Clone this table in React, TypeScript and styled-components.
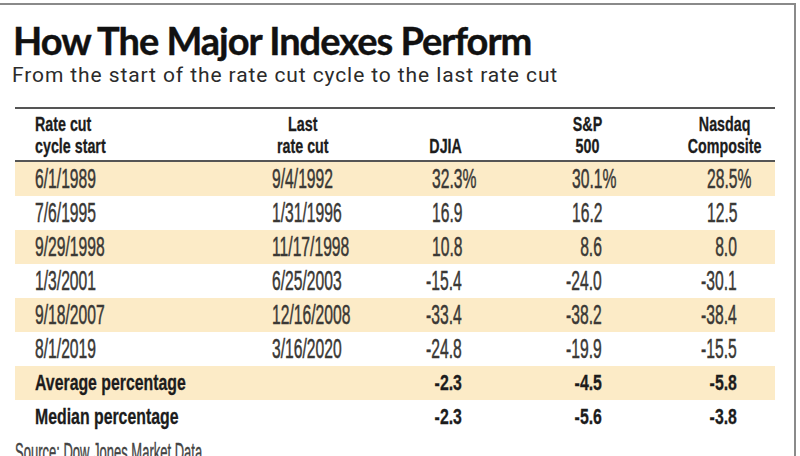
import React from "react"
import styled, { createGlobalStyle } from "styled-components"

const GlobalStyle = createGlobalStyle`
  html, body {
    margin: 0;
    padding: 0;
    background: #ffffff;
  }
  body {
    width: 800px;
    height: 456px;
    overflow: hidden;
  }
`

const NARROW = `"Liberation Sans", Arial, sans-serif`

const Frame = styled.div`
  box-sizing: border-box;
  margin-top: 3px;
  width: 796px;
  height: 453px;
  border-top: 2px solid #8a8a8a;
  border-right: 2px solid #8a8a8a;
  overflow: hidden;
`

const Title = styled.h1`
  margin: 13px 0 0 13px;
  font-family: Lato, "Open Sans", sans-serif;
  font-weight: 700;
  font-size: 38px;
  line-height: 44px;
  letter-spacing: -1px;
  color: #111111;
  -webkit-text-stroke: 0.4px #111111;
`

const Subtitle = styled.p`
  margin: 1px 0 0 12px;
  font-family: Roboto, "Open Sans", sans-serif;
  font-size: 21px;
  line-height: 24px;
  letter-spacing: 0.9px;
  color: #2b2b2b;
`

const Table = styled.div`
  margin: 20px 0 0 15px;
  width: 760px;
  border-top: 2px solid #555555;
`

const Row = styled.div<{ $band?: boolean; $head?: boolean }>`
  display: grid;
  grid-template-columns: 237px 118px 72px 140px 135px;
  padding: 0 38px 0 20px;
  height: ${(p) => (p.$head ? "53px" : "34px")};
  align-items: ${(p) => (p.$head ? "end" : "center")};
  background: ${(p) => (p.$band ? "#fcebc7" : "transparent")};
  border-bottom: ${(p) => (p.$head ? "2px solid #555555" : "none")};
  box-sizing: border-box;
`

const Cell = styled.div<{ $align?: "left" | "right"; $shift?: number }>`
  text-align: ${(p) => p.$align ?? "left"};
  margin-right: ${(p) => (p.$shift ? `-${p.$shift}px` : "0")};
  white-space: nowrap;
`

const Squeeze = styled.span<{
  $bold?: boolean
  $origin?: "left" | "right" | "center"
  $center?: boolean
  $indent?: number
}>`
  position: relative;
  display: inline-block;
  font-family: ${NARROW};
  font-weight: ${(p) => (p.$bold ? 700 : 400)};
  font-size: ${(p) => (p.$bold ? "22px" : "28px")};
  line-height: ${(p) => (p.$bold ? "22px" : "34px")};
  color: ${(p) => (p.$bold ? "#1c1c1c" : "#3a3835")};
  -webkit-text-stroke: ${(p) => (p.$bold ? "0.3px" : "0.5px")} currentColor;
  text-align: ${(p) => (p.$center ? "center" : "inherit")};
  margin-left: ${(p) => p.$indent ?? 0}px;
  transform: scaleX(${(p) => (p.$bold ? 0.72 : 0.56)});
  transform-origin: ${(p) => p.$origin ?? "left"} center;
`

const HeadText = styled(Squeeze)`
  padding-bottom: 3px;
  font-size: 21px;
  transform: scaleX(0.68);
`

const Hang = styled.span`
  position: absolute;
  left: 100%;
  top: 0;
`

const Source = styled.div`
  margin: 4px 0 0 15px;
  font-family: ${NARROW};
  font-size: 25px;
  line-height: 28px;
  color: #444444;
  -webkit-text-stroke: 0.4px #444444;
  white-space: nowrap;
  transform: scaleX(0.52);
  transform-origin: left center;
`

type Line = [string, string, string, string, string]

const rows: Line[] = [
  ["6/1/1989", "9/4/1992", "32.3%", "30.1%", "28.5%"],
  ["7/6/1995", "1/31/1996", "16.9", "16.2", "12.5"],
  ["9/29/1998", "11/17/1998", "10.8", "8.6", "8.0"],
  ["1/3/2001", "6/25/2003", "-15.4", "-24.0", "-30.1"],
  ["9/18/2007", "12/16/2008", "-33.4", "-38.2", "-38.4"],
  ["8/1/2019", "3/16/2020", "-24.8", "-19.9", "-15.5"],
]

const summary = [
  { label: "Average percentage", values: ["-2.3", "-4.5", "-5.8"] },
  { label: "Median percentage", values: ["-2.3", "-5.6", "-3.8"] },
]

const Num = ({ value, bold }: { value: string; bold?: boolean }) => {
  const pct = value.endsWith("%")
  return (
    <Cell $align="right">
      <Squeeze $bold={bold} $origin="right">
        {pct ? value.slice(0, -1) : value}
        {pct && <Hang>%</Hang>}
      </Squeeze>
    </Cell>
  )
}

export default function App() {
  return (
    <>
      <GlobalStyle />
      <Frame>
        <Title>How The Major Indexes Perform</Title>
        <Subtitle>From the start of the rate cut cycle to the last rate cut</Subtitle>
        <Table>
          <Row $head>
            <Cell>
              <HeadText $bold>
                Rate cut
                <br />
                cycle start
              </HeadText>
            </Cell>
            <Cell>
              <HeadText $bold $center $indent={5}>
                Last
                <br />
                rate cut
              </HeadText>
            </Cell>
            <Cell $align="right">
              <HeadText $bold $origin="right">
                DJIA
              </HeadText>
            </Cell>
            <Cell $align="right">
              <HeadText $bold $center $origin="right">
                S&amp;P
                <br />
                500
              </HeadText>
            </Cell>
            <Cell $align="right" $shift={25}>
              <HeadText $bold $center $origin="right">
                Nasdaq
                <br />
                Composite
              </HeadText>
            </Cell>
          </Row>
          {rows.map((r, i) => (
            <Row key={r[0]} $band={i % 2 === 0}>
              <Cell>
                <Squeeze>{r[0]}</Squeeze>
              </Cell>
              <Cell>
                <Squeeze>{r[1]}</Squeeze>
              </Cell>
              <Num value={r[2]} />
              <Num value={r[3]} />
              <Num value={r[4]} />
            </Row>
          ))}
          {summary.map((s, i) => (
            <Row key={s.label} $band={i === 0}>
              <Cell>
                <Squeeze $bold>{s.label}</Squeeze>
              </Cell>
              <Cell />
              {s.values.map((v, j) => (
                <Num key={j} value={v} bold />
              ))}
            </Row>
          ))}
        </Table>
        <Source>Source: Dow Jones Market Data</Source>
      </Frame>
    </>
  )
}
